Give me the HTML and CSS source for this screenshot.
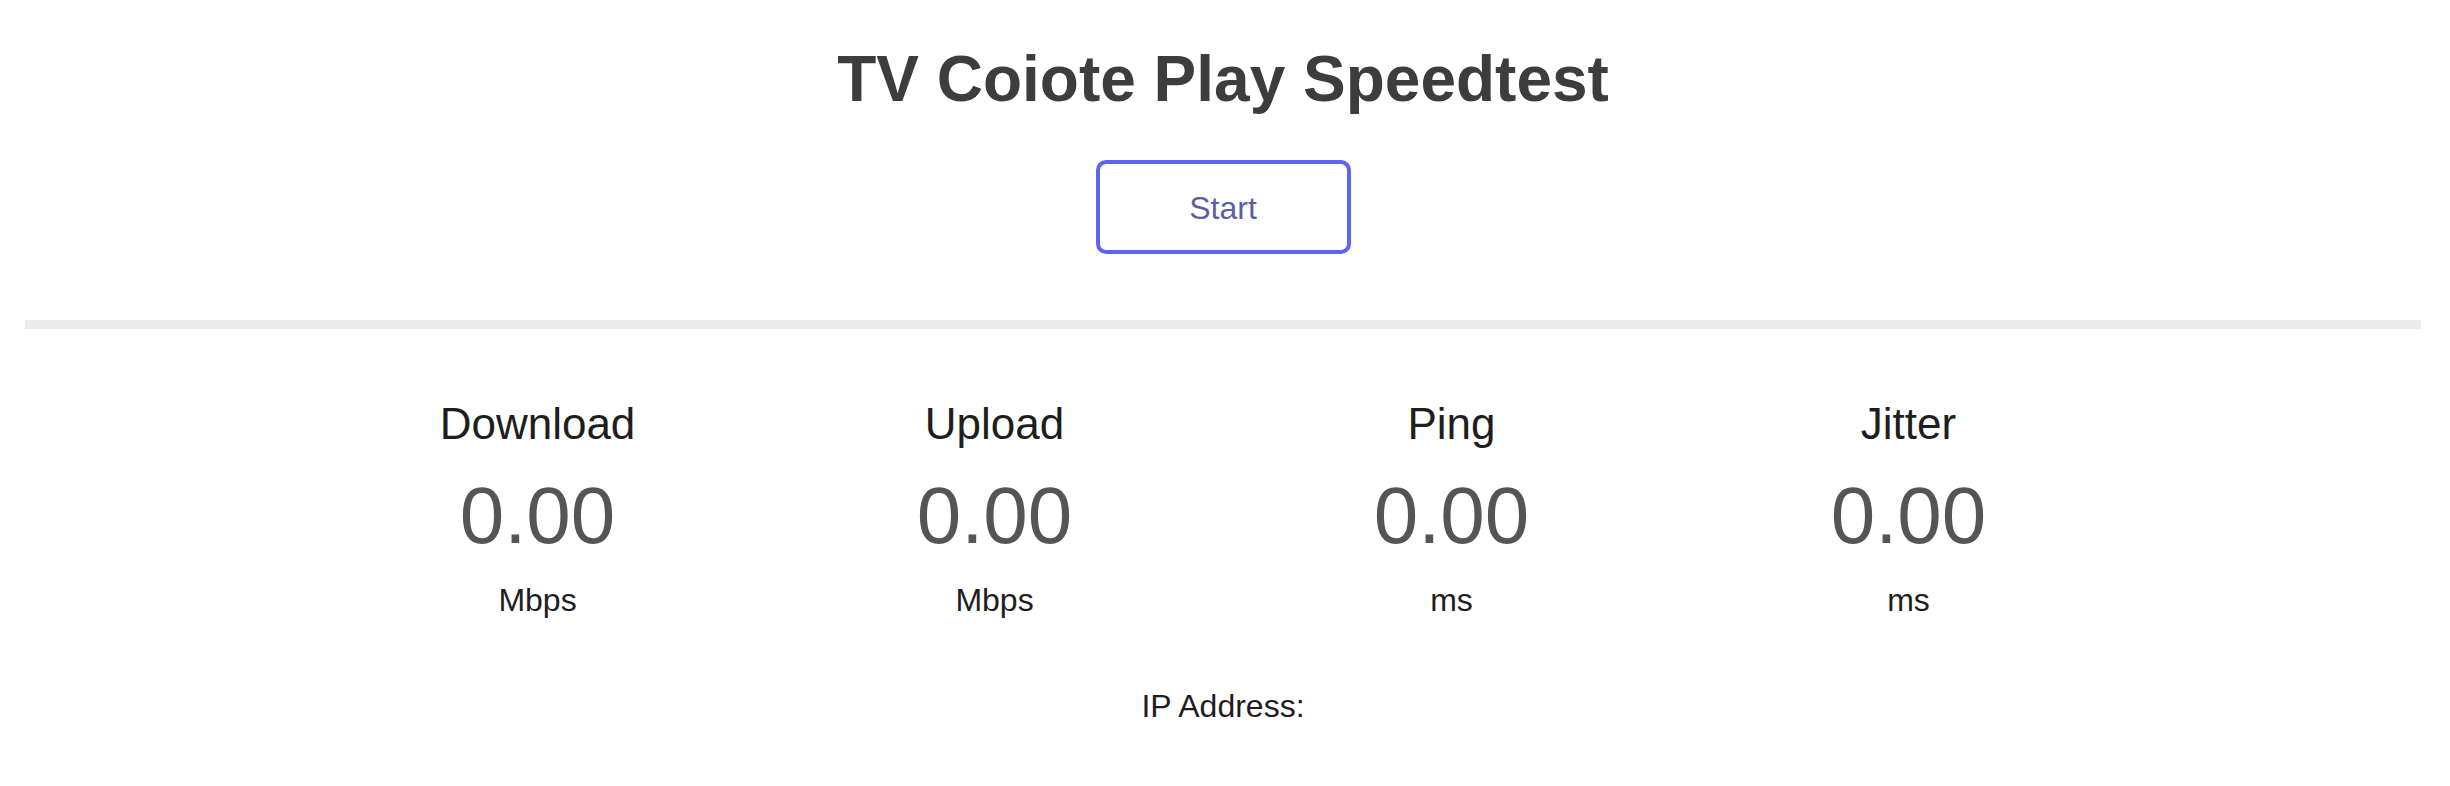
FILE: index.html
```html
<!DOCTYPE html>
<html lang="en">
<head>
    <meta charset="UTF-8">
    <meta name="viewport" content="width=device-width, initial-scale=1.0">
    <title>TV Coiote Play Speedtest</title>
    <link rel="stylesheet" href="styles.css">
</head>
<body>
    <!-- Header -->
    <h1 class="title">TV Coiote Play Speedtest</h1>
    <div class="controls">
        <button class="start-btn">Start</button>
    </div>

    <div class="divider"></div>

    <!-- Results -->
    <div class="results">
        <div class="result">
            <div class="result-label">Download</div>
            <div class="result-value">0.00</div>
            <div class="result-unit">Mbps</div>
        </div>
        <div class="result">
            <div class="result-label">Upload</div>
            <div class="result-value">0.00</div>
            <div class="result-unit">Mbps</div>
        </div>
        <div class="result">
            <div class="result-label">Ping</div>
            <div class="result-value">0.00</div>
            <div class="result-unit">ms</div>
        </div>
        <div class="result">
            <div class="result-label">Jitter</div>
            <div class="result-value">0.00</div>
            <div class="result-unit">ms</div>
        </div>
    </div>

    <div class="ip-info">IP Address: <span id="ip"></span></div>
</body>
</html>
```

FILE: styles.css
```css
body {
    font-family: "Liberation Sans", Arial, Helvetica, sans-serif;
    margin: 0;
    padding: 0 29px 0 25px;
    background: #fff;
    color: #1e1e1e;
    text-align: center;
}
.title {
    font-size: 64px;
    line-height: 72px;
    font-weight: bold;
    color: #3d3d3d;
    margin: 43px 0 0;
}
.controls {
    margin-top: 45px;
}
.start-btn {
    font-family: inherit;
    font-size: 32px;
    color: #5b5ea6;
    background: #fff;
    width: 255px;
    height: 94px;
    padding: 3px 0 0;
    border: 4px solid #5f63f2;
    border-radius: 10px;
    cursor: pointer;
    display: block;
    margin: 0 auto;
}
.divider {
    height: 9px;
    background-color: #ececec;
    margin-top: 66px;
}
.results {
    display: grid;
    grid-template-columns: repeat(4, 457px);
    justify-content: center;
    margin-top: 70px;
}
.result-label {
    font-size: 44px;
    line-height: 50px;
    color: #1e1e1e;
}
.result-value {
    font-size: 80px;
    line-height: 92px;
    color: #555;
    margin-top: 21px;
}
.result-unit {
    font-size: 32px;
    line-height: 36px;
    color: #1e1e1e;
    margin-top: 20px;
}
.ip-info {
    font-size: 32px;
    line-height: 36px;
    margin-top: 70px;
}
```
